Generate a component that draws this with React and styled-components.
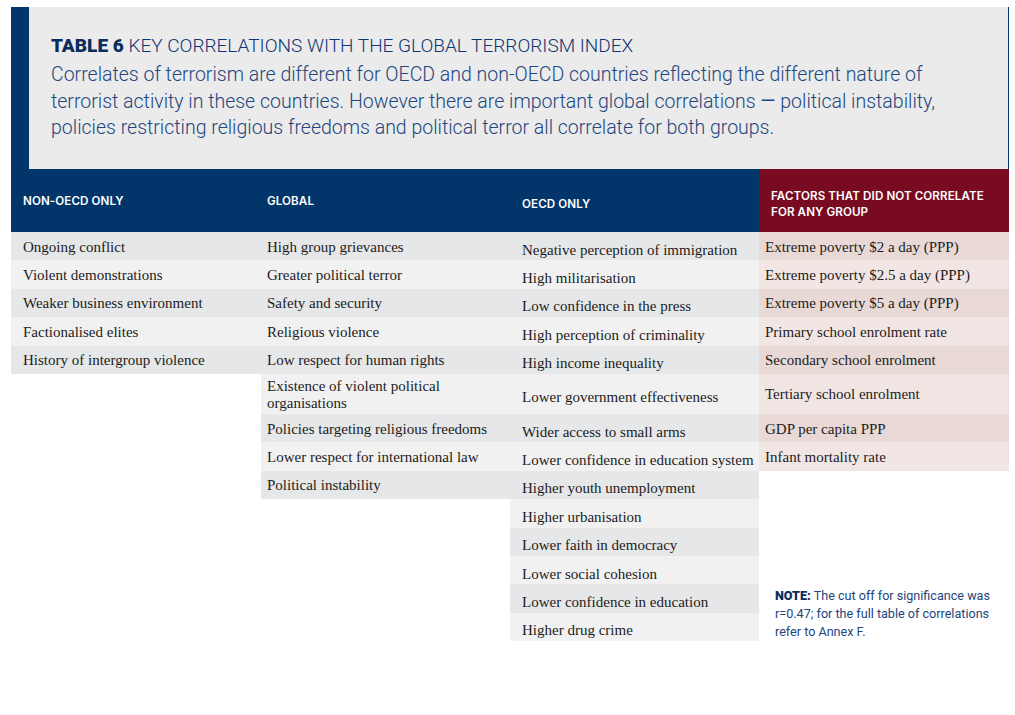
import React from "react";
import styled, { createGlobalStyle } from "styled-components";

const Global = createGlobalStyle`
  html, body { margin: 0; padding: 0; background: #ffffff; }
  body { font-family: "Liberation Serif", serif; }
`;

const NAVY = "#02366b";
const CRIMSON = "#780b21";

const Frame = styled.div`
  width: 998px;
  padding: 7px 0 0 11px;
`;

const Intro = styled.section`
  background: ${NAVY};
  padding-left: 18px;
`;

const IntroBox = styled.div`
  background: #ebebeb;
  height: 162px;
  box-sizing: border-box;
  padding: 27px 10px 0 22px;
  margin-right: 1px;
`;

const Title = styled.h1`
  margin: 0;
  font-family: "Roboto", "Liberation Sans", sans-serif;
  font-weight: 300;
  font-size: 19px;
  line-height: 23px;
  color: #0e3572;
  white-space: nowrap;
  strong { font-weight: 900; color: #0a2d5e; }
`;

const Lead = styled.p`
  margin: 5px 0 0;
  font-family: "Roboto", "Liberation Sans", sans-serif;
  font-weight: 300;
  font-size: 19.5px;
  line-height: 26.5px;
  color: #22467f;
  white-space: nowrap;
`;

const Grid = styled.div`
  display: grid;
  grid-template-columns: 250px 249px 249px 250px;
  align-items: start;
`;

const HeadCell = styled.div`
  height: 63px;
  box-sizing: border-box;
  background: ${(p) => (p.$tone === "crimson" ? CRIMSON : NAVY)};
  color: #ffffff;
  display: flex;
  align-items: center;
  padding: ${(p) => p.$top || 0}px 8px 0 ${(p) => p.$pad}px;
  font-family: "Inter", "Liberation Sans", sans-serif;
  font-weight: 600;
  font-size: 11.6px;
  line-height: 16px;
  letter-spacing: 0.1px;
`;

const Column = styled.div`
  display: flex;
  flex-direction: column;
`;

const Cell = styled.div`
  height: ${(p) => (p.$tall ? 40 : 28.4)}px;
  box-sizing: border-box;
  display: flex;
  align-items: center;
  padding: ${(p) => p.$top}px 6px 0 ${(p) => p.$pad}px;
  background: ${(p) =>
    p.$pink
      ? p.$dark
        ? "#e8d9d6"
        : "#f2e6e4"
      : p.$dark
      ? "#e6e7e8"
      : "#f1f1f1"};
  font-family: "Liberation Serif", serif;
  font-size: 15px;
  line-height: 17px;
  color: #1c1c1c;
  white-space: ${(p) => (p.$tall ? "normal" : "nowrap")};
`;

const Note = styled.p`
  margin: 116px 0 0 16px;
  font-family: "Roboto", "Liberation Sans", sans-serif;
  font-size: 12.6px;
  line-height: 18px;
  color: #22457c;
  white-space: nowrap;
  strong { font-weight: 900; color: #0a2d5e; }
`;

const nonOecd = [
  "Ongoing conflict",
  "Violent demonstrations",
  "Weaker business environment",
  "Factionalised elites",
  "History of intergroup violence",
];

const global = [
  "High group grievances",
  "Greater political terror",
  "Safety and security",
  "Religious violence",
  "Low respect for human rights",
  "Existence of violent political organisations",
  "Policies targeting religious freedoms",
  "Lower respect for international law",
  "Political instability",
];

const oecd = [
  "Negative perception of immigration",
  "High militarisation",
  "Low confidence in the press",
  "High perception of criminality",
  "High income inequality",
  "Lower government effectiveness",
  "Wider access to small arms",
  "Lower confidence in education system",
  "Higher youth unemployment",
  "Higher urbanisation",
  "Lower faith in democracy",
  "Lower social cohesion",
  "Lower confidence in education",
  "Higher drug crime",
];

const none = [
  "Extreme poverty $2 a day (PPP)",
  "Extreme poverty $2.5 a day (PPP)",
  "Extreme poverty $5 a day (PPP)",
  "Primary school enrolment rate",
  "Secondary school enrolment",
  "Tertiary school enrolment",
  "GDP per capita PPP",
  "Infant mortality rate",
];

const renderCells = (items, opts) =>
  items.map((t, i) => (
    <Cell
      key={t}
      $dark={i % 2 === 0}
      $tall={i === 5}
      $pad={opts.pad}
      $top={opts.top ?? 2}
      $pink={opts.pink}
    >
      {t}
    </Cell>
  ));

export default function App() {
  return (
    <>
      <Global />
      <Frame>
        <Intro>
          <IntroBox>
            <Title>
              <strong>TABLE 6</strong> KEY CORRELATIONS WITH THE GLOBAL TERRORISM INDEX
            </Title>
            <Lead>
              Correlates of terrorism are different for OECD and non-OECD countries reflecting the different nature of
              <br />
              terrorist activity in these countries. However there are important global correlations <b>—</b> political instability,
              <br />
              policies restricting religious freedoms and political terror all correlate for both groups.
            </Lead>
          </IntroBox>
        </Intro>
        <Grid>
          <HeadCell $pad={12} $top={1}>NON-OECD ONLY</HeadCell>
          <HeadCell $pad={6} $top={1}>GLOBAL</HeadCell>
          <HeadCell $pad={12} $top={7}>OECD ONLY</HeadCell>
          <HeadCell $pad={12} $top={7} $tone="crimson">
            FACTORS THAT DID NOT CORRELATE
            <br />
            FOR ANY GROUP
          </HeadCell>
        </Grid>
        <Grid>
          <Column>{renderCells(nonOecd, { pad: 12 })}</Column>
          <Column>{renderCells(global, { pad: 6 })}</Column>
          <Column>{renderCells(oecd, { pad: 12, top: 8 })}</Column>
          <Column>
            {renderCells(none, { pad: 6, pink: true })}
            <Note>
              <strong>NOTE:</strong> The cut off for significance was
              <br />
              r=0.47; for the full table of correlations
              <br />
              refer to Annex F.
            </Note>
          </Column>
        </Grid>
      </Frame>
    </>
  );
}
